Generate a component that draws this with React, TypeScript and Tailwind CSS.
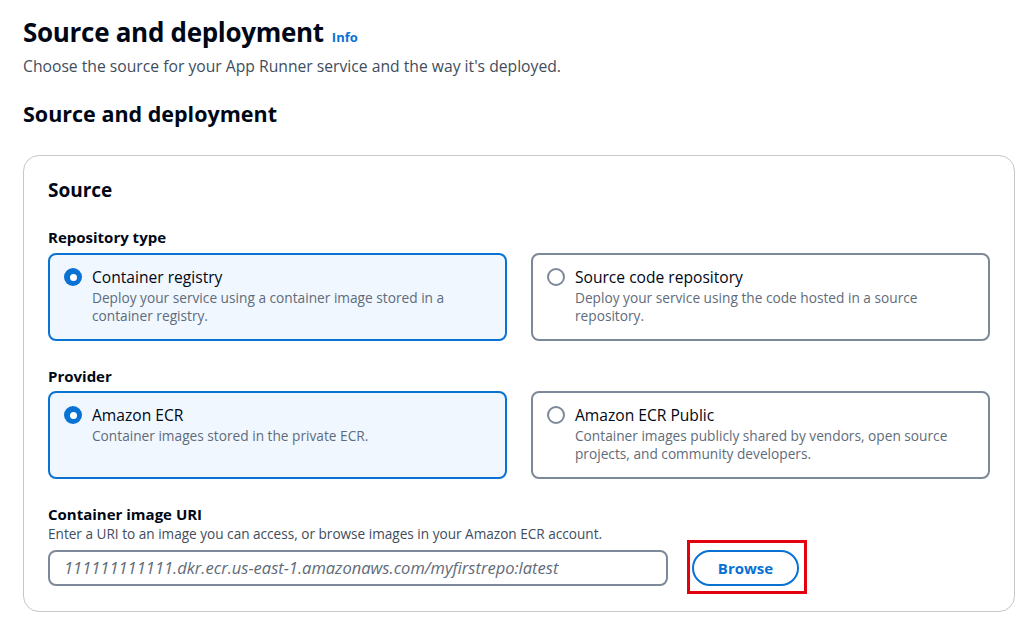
import React from "react";

const font = { fontFamily: '"Open Sans", "Noto Sans", Arial, sans-serif' };

function Radio({ checked }: { checked: boolean }) {
  return checked ? (
    <span className="mt-[2px] flex h-[18px] w-[18px] shrink-0 items-center justify-center rounded-full bg-[#0972d3]">
      <span className="h-[7px] w-[7px] rounded-full bg-white" />
    </span>
  ) : (
    <span className="mt-[2px] h-[18px] w-[18px] shrink-0 rounded-full border-2 border-[#7d8998] bg-white" />
  );
}

function Tile({
  checked,
  title,
  desc,
}: {
  checked: boolean;
  title: string;
  desc: string;
}) {
  return (
    <div
      className={
        checked
          ? "flex h-[88px] flex-1 gap-[10px] rounded-[8px] border-2 border-[#0972d3] bg-[#f0f7ff] px-[14px] pt-[11px]"
          : "flex h-[88px] flex-1 gap-[10px] rounded-[8px] border-2 border-[#7d8998] bg-white px-[14px] pt-[11px]"
      }
    >
      <Radio checked={checked} />
      <div className="flex flex-col">
        <div className="text-[15.6px] leading-[22px] text-[#000716]">{title}</div>
        <div className="mt-[1px] text-[13.7px] leading-[18px] text-[#5f6b7a]">{desc}</div>
      </div>
    </div>
  );
}

export default function App() {
  return (
    <div className="h-[617px] w-[1024px] overflow-hidden bg-white" style={font}>
      <div className="pl-[23px] pr-[9px] pt-[14px]">
        <div className="flex items-baseline gap-[8px]">
          <h1 className="text-[26px] font-bold leading-[36px] tracking-[-0.3px] text-[#000716]">
            Source and deployment
          </h1>
          <span className="text-[13px] font-bold text-[#0972d3]">Info</span>
        </div>
        <p className="mt-[5px] text-[15.7px] leading-[22px] text-[#414d5c]">
          Choose the source for your App Runner service and the way it's deployed.
        </p>
        <h2 className="mt-[22px] text-[21.5px] font-bold leading-[30px] text-[#000716]">
          Source and deployment
        </h2>
        <div className="mt-[26px] h-[457px] rounded-[16px] border border-[#c6c6cd] px-[24px] pt-[20px]">
          <h3 className="text-[19px] font-bold leading-[28px] text-[#000716]">Source</h3>
          <div className="mt-[22px] text-[15px] font-bold leading-[22px] text-[#000716]">
            Repository type
          </div>
          <div className="mt-[5px] flex gap-[24px]">
            <Tile
              checked
              title="Container registry"
              desc="Deploy your service using a container image stored in a container registry."
            />
            <Tile
              checked={false}
              title="Source code repository"
              desc="Deploy your service using the code hosted in a source repository."
            />
          </div>
          <div className="mt-[24px] text-[15px] font-bold leading-[22px] text-[#000716]">
            Provider
          </div>
          <div className="mt-[4px] flex gap-[24px]">
            <Tile
              checked
              title="Amazon ECR"
              desc="Container images stored in the private ECR."
            />
            <Tile
              checked={false}
              title="Amazon ECR Public"
              desc="Container images publicly shared by vendors, open source projects, and community developers."
            />
          </div>
          <div className="mt-[24px] text-[15px] font-bold leading-[22px] text-[#000716]">
            Container image URI
          </div>
          <div className="text-[13.6px] leading-[18px] text-[#414d5c]">
            Enter a URI to an image you can access, or browse images in your Amazon ECR account.
          </div>
          <div className="mt-[7px] flex items-center gap-[24px]">
            <div className="flex h-[36px] w-[620px] items-center rounded-[8px] border-2 border-[#7d8998] px-[14px] text-[16.5px] italic text-[#5f6b7a]">
              111111111111.dkr.ecr.us-east-1.amazonaws.com/myfirstrepo:latest
            </div>
            <div className="relative">
              <button className="flex h-[36px] w-[107px] items-center justify-center rounded-full border-2 border-[#0972d3] text-[15px] font-bold text-[#0972d3]">
                Browse
              </button>
              <div className="pointer-events-none absolute -bottom-[8px] -left-[5px] -right-[8px] -top-[10px] border-[3px] border-[#e3000f]" />
            </div>
          </div>
        </div>
      </div>
    </div>
  );
}
